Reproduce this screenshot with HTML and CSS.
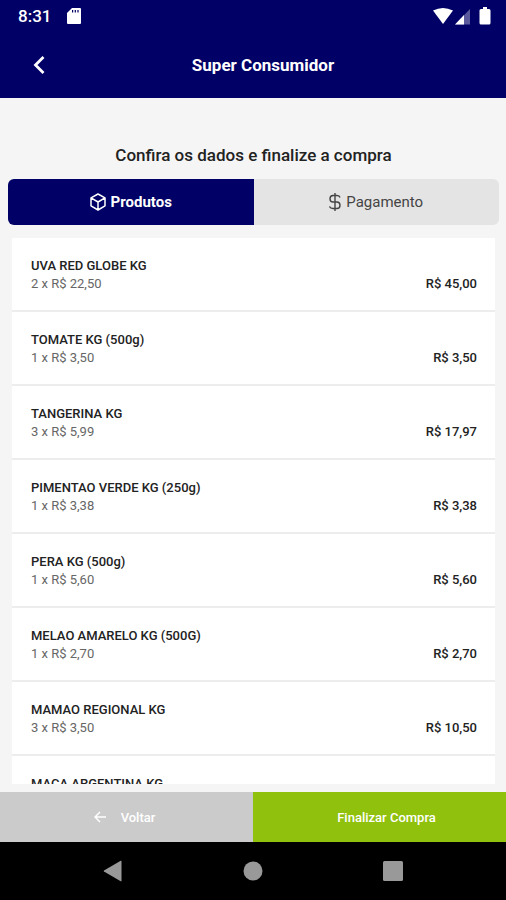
FILE: index.html
```html
<!DOCTYPE html>
<html lang="pt-BR">
<head>
  <meta charset="UTF-8" />
  <meta name="viewport" content="width=device-width, initial-scale=1.0"/>
  <title>Super Consumidor</title>
  <link rel="stylesheet" href="styles.css">
</head>
<body>
  <header class="header">
    <div class="status-bar">
      <span class="clock">8:31</span>
      <svg class="sd-card" width="14" height="16" viewBox="0 0 14 16">
        <path fill="#fff" d="M5 0h8q1 0 1 1v14q0 1-1 1H1q-1 0-1-1V5z"/>
        <path stroke="#000066" stroke-width="1.2" d="M5.6 2v2.5M8.3 2v2.5M11 2v2.5"/>
      </svg>
      <svg class="signals" width="58" height="18" viewBox="0 0 58 18">
        <path fill="#fff" d="M0 3.5Q10 -1.5 20 3.5L10 17z"/>
        <path fill="#fff" opacity=".35" d="M37 2v15.5H22z"/>
        <path fill="#fff" d="M31 8v9.5H22z"/>
        <path fill="#fff" d="M50 0h4v2h2q1.500 0 1.500 1.500v12.500q0 1.500-1.500 1.500h-8q-1.500 0-1.500-1.500V3.500q0-1.500 1.500-1.500h2z"/>
      </svg>
    </div>
    <div class="title-bar">
      <button class="back-btn" aria-label="Voltar">
        <svg width="12" height="18" viewBox="0 0 12 18" fill="none" stroke="#fff" stroke-width="2.8"><path d="M10.5 1L2.5 9l8 8"/></svg>
      </button>
      <h1>Super Consumidor</h1>
    </div>
  </header>

  <main class="content">
    <h2>Confira os dados e finalize a compra</h2>
    <div class="tabs">
      <button class="tab active">
        <svg width="16" height="18" viewBox="0 0 16 18" fill="none" stroke="#fff" stroke-width="1.5" stroke-linejoin="round"><path d="M8 1l7 3.8v8L8 17l-7-4.2v-8zM1 4.8L8 9l7-4.2M8 9v8"/></svg>
        Produtos
      </button>
      <button class="tab">
        <svg width="12" height="18" viewBox="0 0 12 18" fill="none" stroke="#444" stroke-width="1.4"><path d="M6 0v18M11 4.5Q10.5 2.5 8 2.5H4Q1 2.5 1 5.700T4 9h4q3 0 3 3.200T8 15.5H4q-3 0-3.5-2.2"/></svg>
        Pagamento
      </button>
    </div>

    <ul class="products">
      <li class="product">
        <div><h3>UVA RED GLOBE KG</h3><p>2 x R$ 22,50</p></div>
        <strong>R$ 45,00</strong>
      </li>
      <li class="product">
        <div><h3>TOMATE KG (500g)</h3><p>1 x R$ 3,50</p></div>
        <strong>R$ 3,50</strong>
      </li>
      <li class="product">
        <div><h3>TANGERINA KG</h3><p>3 x R$ 5,99</p></div>
        <strong>R$ 17,97</strong>
      </li>
      <li class="product">
        <div><h3>PIMENTAO VERDE KG (250g)</h3><p>1 x R$ 3,38</p></div>
        <strong>R$ 3,38</strong>
      </li>
      <li class="product">
        <div><h3>PERA KG (500g)</h3><p>1 x R$ 5,60</p></div>
        <strong>R$ 5,60</strong>
      </li>
      <li class="product">
        <div><h3>MELAO AMARELO KG (500G)</h3><p>1 x R$ 2,70</p></div>
        <strong>R$ 2,70</strong>
      </li>
      <li class="product">
        <div><h3>MAMAO REGIONAL KG</h3><p>3 x R$ 3,50</p></div>
        <strong>R$ 10,50</strong>
      </li>
      <li class="product">
        <div><h3>MACA ARGENTINA KG</h3></div>
      </li>
    </ul>
  </main>

  <footer class="actions">
    <button class="action cancel">
      <svg width="12" height="12" viewBox="0 0 12 12" fill="none" stroke="#fff" stroke-width="1.5"><path d="M12 6H1M6 1L1 6l5 5"/></svg>
      Voltar
    </button>
    <button class="action confirm">Finalizar Compra</button>
  </footer>

  <nav class="system-nav">
    <button aria-label="Anterior"><svg width="20" height="22" viewBox="0 0 20 22"><path fill="#999" d="M18.5 1v20q0 .5-.8.2L1 11.5q-.8-.5 0-1L17.7.8q.8-.3.8.2z"/></svg></button>
    <button aria-label="Início"><svg width="20" height="20" viewBox="0 0 20 20"><circle cx="10" cy="10" r="9.5" fill="#999"/></svg></button>
    <button aria-label="Recentes"><svg width="20" height="20" viewBox="0 0 20 20"><rect width="20" height="20" rx="1.5" fill="#999"/></svg></button>
  </nav>
</body>
</html>
```
FILE: styles.css
```css
:root {
  --navy: #000066;
  --bg: #f5f5f5;
  --green: #8fc10d;
  --text: #222222;
}

* {
  box-sizing: border-box;
  margin: 0;
  padding: 0;
}

body {
  display: flex;
  flex-direction: column;
  height: 100vh;
  background: var(--bg);
  color: var(--text);
  font-family: Roboto, sans-serif;
}

button {
  border: none;
  background: none;
  font-family: inherit;
  cursor: pointer;
}

svg {
  display: block;
  flex: none;
}

.header {
  background: var(--navy);
  color: white;
}

.status-bar {
  display: flex;
  align-items: center;
  height: 32px;
  padding: 0 15px 0 18px;
}

.clock {
  font-size: 17px;
  font-weight: 500;
}

.sd-card {
  margin-left: 16px;
}

.signals {
  margin-left: auto;
}

.title-bar {
  display: grid;
  grid-template-columns: 80px 1fr 60px;
  align-items: center;
  height: 66px;
}

.back-btn {
  justify-self: start;
  padding: 10px 33px;
}

.title-bar h1 {
  font-size: 17px;
  font-weight: 700;
  text-align: center;
}

.content {
  display: flex;
  flex: 1;
  flex-direction: column;
  min-height: 0;
  padding: 46px 7px 8px 8px;
}

.content h2 {
  font-size: 17px;
  font-weight: 500;
  line-height: 22px;
  text-align: center;
}

.tabs {
  display: flex;
  margin-top: 13px;
  border-radius: 6px;
  overflow: hidden;
}

.tab {
  display: flex;
  flex: 1;
  align-items: center;
  justify-content: center;
  gap: 5px;
  height: 46px;
  background: #e4e4e4;
  color: #444444;
  font-size: 15px;
}

.tab.active {
  background: var(--navy);
  color: white;
  font-weight: 700;
}

.products {
  flex: 1;
  min-height: 0;
  margin: 13px 4px 0;
  overflow: hidden;
  list-style: none;
}

.product {
  display: flex;
  align-items: flex-end;
  justify-content: space-between;
  height: 74px;
  padding: 0 18px 17px 19px;
  background: white;
  border-bottom: 2px solid #ededed;
}

.product div {
  height: 36px;
}

.product h3,
.product p,
.product strong {
  font-size: 13px;
  line-height: 18px;
}

.product h3,
.product strong {
  font-weight: 500;
}

.product p {
  color: #666666;
}

.actions {
  display: flex;
}

.action {
  display: flex;
  align-items: center;
  justify-content: center;
  width: 50%;
  height: 50px;
  color: white;
  font-size: 13px;
  font-weight: 500;
}

.cancel {
  gap: 15px;
  padding-right: 4px;
  background: #cbcbcb;
}

.confirm {
  padding-left: 14px;
  background: var(--green);
}

.system-nav {
  display: flex;
  align-items: center;
  justify-content: center;
  gap: 120px;
  height: 58px;
  background: black;
}
```
